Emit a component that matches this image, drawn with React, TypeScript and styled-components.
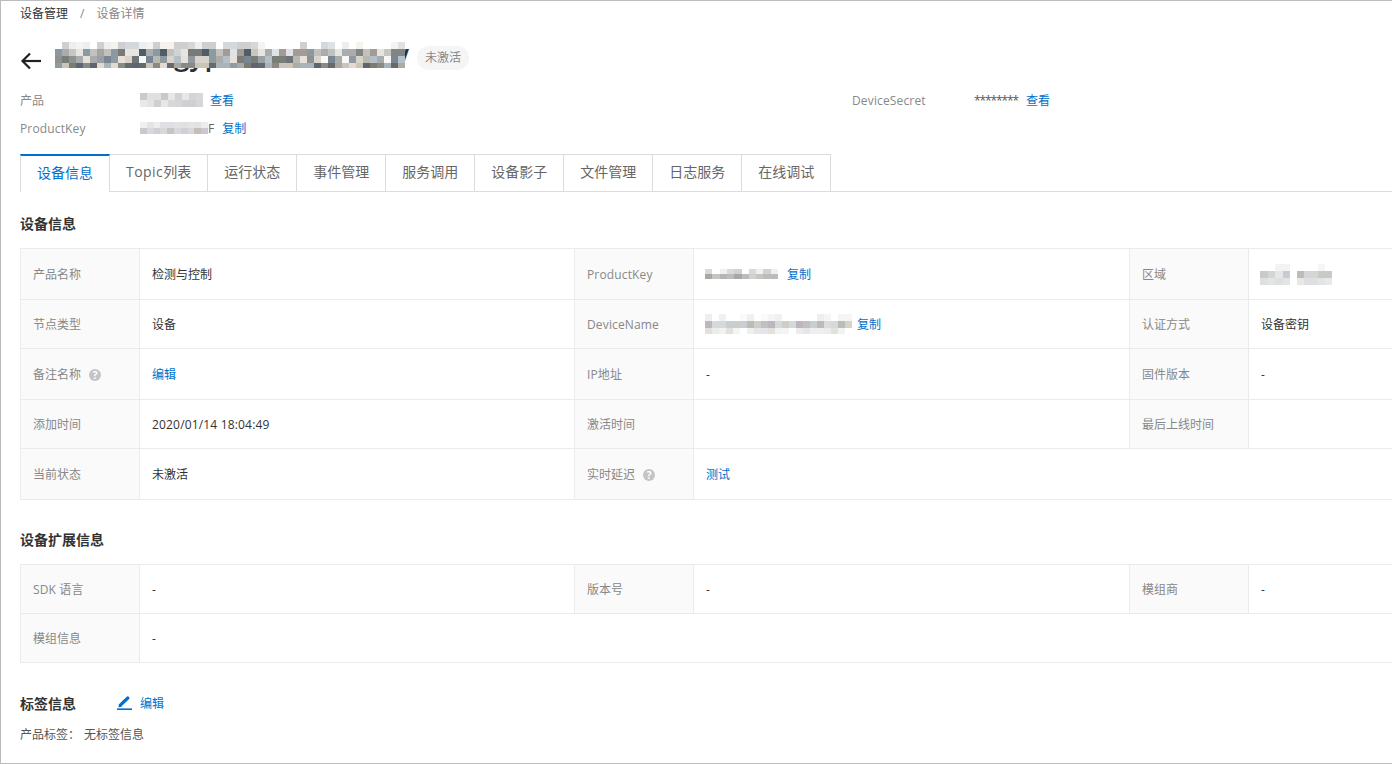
import React from 'react';
import styled, { createGlobalStyle } from 'styled-components';

const GlobalStyle = createGlobalStyle`
  html, body {
    margin: 0;
    padding: 0;
    background: #fff;
  }
  body {
    font-family: "Open Sans", "Noto Sans CJK SC", sans-serif;
    font-size: 12px;
    color: #333;
  }
`;

const TABS = ['设备信息', 'Topic列表', '运行状态', '事件管理', '服务调用', '设备影子', '文件管理', '日志服务', '在线调试'];

const TITLE_ROWS = [
  ['#ffffff', '#ffffff', '#f6f3ef', '#d5d8da', '#cfcfd0', '#eceff2', '#ffffff', '#dfe2e4'],
  ['#e8e5e0', '#a5a6a4', '#8a9aa2', '#c8c6c2', '#a39b94', '#7f8683', '#dde3e7', '#777a78', '#c0c2be', '#4f5d68', '#d2d3d5', '#aaacae', '#c4c0bc'],
  ['#8d9190', '#e6e1da', '#a8acac', '#788691', '#f8f8f6', '#5f6b75', '#7a7c78', '#b8b8b0', '#909a9e', '#6e7478', '#b5bfc6', '#d8d4cc', '#9a9fa3'],
  ['#b0aaa2', '#8f9ba3', '#8a8a84', '#cbc4b8', '#666a6a', '#a9b4ba', '#7d7a72', '#c2c6c8', '#e2dad0', '#5d6670', '#a8a8a4'],
];
const PALE_ROWS = [
  ['#e9e7e6', '#d5d4d6', '#cfcdcc', '#dfe0e2', '#e4e4e6', '#d2d2d6', '#cbcac8', '#d8d8dc', '#c9c9cc'],
  ['#ebe9e8', '#d9d8d8', '#d2d0ce', '#e2e3e5', '#d6d6da', '#cfcfd2', '#e6e6e6'],
];
const KEY_ROWS = [
  ['#f2efed', '#dfe0e4', '#e6e4e2', '#ecedef', '#e2e2e6'],
  ['#c4bdb8', '#cfd0d6', '#c6c4c6', '#d8d8da', '#c9c9cd'],
];
const SMALL_KEY_ROWS = [
  ['#e6e6e4', '#cfd2cf', '#f0f0ee', '#d8dad8', '#ffffff'],
  ['#a9a7a5', '#c4c6c2', '#bcbcbc', '#d0d2d0', '#b4b6b4'],
];
const NAME_ROWS = [
  ['#ffffff', '#f5f5f5', '#f0f0f0', '#fafafa', '#eeeeee', '#ffffff'],
  ['#dcdcdc', '#c2bfc2', '#cfcec6', '#b8bdb8', '#d4d9d9', '#bdb6c0', '#d6d2c8', '#c9ced0'],
  ['#f2f2f2', '#ececec', '#e2e2dc', '#f4f4f4', '#e6e6e8', '#efefef', '#ffffff'],
];
const REGION_ROWS = [
  ['#ffffff', '#f3f3f1', '#f6f6f6', '#ffffff'],
  ['#c9cac6', '#bcbdb8', '#c6ccd2', '#d4d6d6', '#e4e6e8', '#d8d8d0', '#8e9498'],
  ['#e8e8e6', '#e2e4e6', '#dedfe0', '#eeeeee', '#d6d8d8', '#f0f0f0'],
];

const pick = (seed: number) => (seed * 1103515245 + 12345) & 0x7fffffff;

// blurred values are drawn as pixel mosaics
const Mosaic: React.FC<{ cols: number; cell: number; seed: number; palette: string[][]; heights: number[] }> = ({
  cols,
  cell,
  seed,
  palette,
  heights,
}) => {
  const cells: React.ReactNode[] = [];
  let s = seed;
  let top = 0;
  heights.forEach((h, y) => {
    const colours = palette[y % palette.length];
    for (let x = 0; x < cols; x++) {
      s = pick(s);
      cells.push(
        <rect key={`${x}-${y}`} x={x * cell} y={top} width={cell + 0.2} height={h} fill={colours[(s >> 16) % colours.length]} />,
      );
    }
    top += h;
  });
  return (
    <MosaicSvg width={cols * cell} height={top} viewBox={`0 0 ${cols * cell} ${top}`} shapeRendering="crispEdges">
      {cells}
    </MosaicSvg>
  );
};

const HelpIcon = () => <HelpDot>?</HelpDot>;

const EditIcon = () => (
  <svg width="15" height="14" viewBox="0 0 15 14" fill="none">
    <path d="M3.4 9.2 10.8 2" stroke="#0070cc" strokeWidth="3.2" strokeLinecap="round" />
    <path d="M1.4 11.6 2.2 8l2.6 2.6z" fill="#0070cc" />
    <rect x="0" y="12.4" width="15" height="1.6" fill="#0070cc" />
  </svg>
);

const BackArrow = () => (
  <svg width="22" height="18" viewBox="0 0 22 18" fill="none" stroke="#222" strokeWidth="2.2">
    <path d="M21 9H2.5" />
    <path d="M10 1.5 2.5 9l7.5 7.5" />
  </svg>
);

const DetailColumns = () => (
  <colgroup>
    <LabelCol />
    <ValueCol />
    <LabelCol />
    <ValueCol $wide />
    <LabelCol />
    <col />
  </colgroup>
);

export default function App() {
  return (
    <Page>
      <GlobalStyle />
      <Breadcrumb>
        <Crumb>设备管理</Crumb>
        <CrumbSep>/</CrumbSep>
        <CrumbCurrent>设备详情</CrumbCurrent>
      </Breadcrumb>

      <TitleRow>
        <BackButton>
          <BackArrow />
        </BackButton>
        <TitleBlur>
          <TitleTail $left={119}>gyp</TitleTail>
          <TitleTail $left={339}>v</TitleTail>
          <Mosaic cols={50} cell={7} seed={37} palette={TITLE_ROWS} heights={[7, 7, 7, 5]} />
        </TitleBlur>
        <Badge>未激活</Badge>
      </TitleRow>

      <MetaGrid>
        <MetaLabel>产品</MetaLabel>
        <MetaValue>
          <Mosaic cols={9} cell={7} seed={11} palette={PALE_ROWS} heights={[7, 7]} />
          <Link>查看</Link>
        </MetaValue>
        <MetaLabel $latin>DeviceSecret</MetaLabel>
        <MetaValue>
          <Secret>********</Secret>
          <Link>查看</Link>
        </MetaValue>
        <MetaLabel $latin>ProductKey</MetaLabel>
        <MetaValue>
          <KeyBlur>
            <Mosaic cols={10} cell={6.8} seed={5} palette={KEY_ROWS} heights={[6, 6]} />
            <span>F</span>
          </KeyBlur>
          <Link>复制</Link>
        </MetaValue>
      </MetaGrid>

      <Tabs>
        {TABS.map((tab, i) => (
          <Tab key={tab} $active={i === 0}>
            {tab.startsWith('Topic') ? (
              <>
                <TabLatin>Topic</TabLatin>列表
              </>
            ) : (
              tab
            )}
          </Tab>
        ))}
      </Tabs>

      <SectionTitle $top={20}>设备信息</SectionTitle>
      <InfoTable>
        <DetailColumns />
        <tbody>
          <Row $h={51}>
            <Label>产品名称</Label>
            <Value>检测与控制</Value>
            <Label $latin>ProductKey</Label>
            <Value>
              <ValueInner>
                <Mosaic cols={10} cell={7.3} seed={23} palette={SMALL_KEY_ROWS} heights={[5, 5]} />
                <Link>复制</Link>
              </ValueInner>
            </Value>
            <Label>区域</Label>
            <Value>
              <ValueInner>
                <Mosaic cols={4} cell={7.5} seed={3} palette={REGION_ROWS} heights={[7, 7, 7]} />
                <RegionGap />
                <Mosaic cols={5} cell={7} seed={71} palette={REGION_ROWS} heights={[7, 7, 7]} />
              </ValueInner>
            </Value>
          </Row>
          <Row $h={49}>
            <Label>节点类型</Label>
            <Value>设备</Value>
            <Label $latin>DeviceName</Label>
            <Value>
              <ValueInner $shift>
                <Mosaic cols={21} cell={7} seed={41} palette={NAME_ROWS} heights={[7, 7, 6]} />
                <Link>复制</Link>
              </ValueInner>
            </Value>
            <Label>认证方式</Label>
            <Value>设备密钥</Value>
          </Row>
          <Row $h={51}>
            <Label>
              备注名称
              <HelpIcon />
            </Label>
            <Value>
              <BareLink>编辑</BareLink>
            </Value>
            <Label $latin>IP地址</Label>
            <Value>-</Value>
            <Label>固件版本</Label>
            <Value>-</Value>
          </Row>
          <Row $h={49}>
            <Label>添加时间</Label>
            <Value $latin>2020/01/14 18:04:49</Value>
            <Label>激活时间</Label>
            <Value />
            <Label>最后上线时间</Label>
            <Value />
          </Row>
          <Row $h={51}>
            <Label>当前状态</Label>
            <Value>未激活</Value>
            <Label>
              实时延迟
              <HelpIcon />
            </Label>
            <Value colSpan={3}>
              <BareLink>测试</BareLink>
            </Value>
          </Row>
        </tbody>
      </InfoTable>

      <SectionTitle $top={28}>设备扩展信息</SectionTitle>
      <InfoTable>
        <DetailColumns />
        <tbody>
          <Row $h={49}>
            <Label $latin>SDK 语言</Label>
            <Value>-</Value>
            <Label>版本号</Label>
            <Value>-</Value>
            <Label>模组商</Label>
            <Value>-</Value>
          </Row>
          <Row $h={49}>
            <Label>模组信息</Label>
            <Value colSpan={5}>-</Value>
          </Row>
        </tbody>
      </InfoTable>

      <TagHeader>
        <TagTitle>标签信息</TagTitle>
        <EditLink>
          <EditIcon />
          编辑
        </EditLink>
      </TagHeader>
      <TagLine>
        <span>产品标签：</span>
        <span>无标签信息</span>
      </TagLine>
    </Page>
  );
}

const Page = styled.div`
  box-sizing: border-box;
  width: 1392px;
  height: 764px;
  overflow: hidden;
  padding-left: 19px;
  border: 1px solid #bcbcbc;
  border-right: 0;
`;

const MosaicSvg = styled.svg`
  display: block;
  flex: none;
  position: relative;
`;

const Breadcrumb = styled.div`
  display: flex;
  align-items: center;
  height: 26px;
  line-height: 26px;
`;

const Crumb = styled.span`
  color: #333;
`;

const CrumbSep = styled.span`
  margin: 0 12px;
  color: #888;
`;

const CrumbCurrent = styled.span`
  color: #888;
`;

const TitleRow = styled.div`
  display: flex;
  align-items: center;
  height: 38px;
  margin-top: 15px;
`;

const BackButton = styled.span`
  display: flex;
  width: 35px;
  flex: none;
`;

const TitleBlur = styled.div`
  position: relative;
  z-index: 0;
  width: 350px;
  height: 26px;
  margin-bottom: 13px;
  display: flex;
`;

const TitleTail = styled.span<{ $left: number }>`
  position: absolute;
  left: ${(p) => p.$left}px;
  top: -3px;
  font-size: 28px;
  font-weight: 600;
  line-height: 30px;
  color: #2b2f36;
`;

const Badge = styled.span`
  margin-left: 12px;
  height: 24px;
  line-height: 24px;
  margin-bottom: 6px;
  padding: 0 8px;
  border-radius: 12px;
  background: #f5f5f5;
  color: #888;
`;

const MetaGrid = styled.div`
  display: grid;
  grid-template-columns: 120px 712px 122px 1fr;
  grid-auto-rows: 28px;
  margin-top: 6px;
`;

const MetaLabel = styled.div<{ $latin?: boolean }>`
  display: flex;
  align-items: center;
  color: #888;
  letter-spacing: ${(p) => (p.$latin ? '0.15px' : '0')};
`;

const MetaValue = styled.div`
  display: flex;
  align-items: center;
  color: #666;
`;

const Secret = styled.span`
  color: #555;
  letter-spacing: -1.1px;
  margin-right: 1px;
`;

const KeyBlur = styled.span`
  display: inline-flex;
  align-items: center;
  margin-right: 1px;
  color: #666;
`;

const Link = styled.a`
  margin-left: 7px;
  color: #0070cc;
  cursor: pointer;
`;

const BareLink = styled.a`
  color: #0070cc;
  cursor: pointer;
`;

const Tabs = styled.div`
  display: flex;
  height: 38px;
  margin-top: 12px;
  box-sizing: border-box;
  border-bottom: 1px solid #dcdcdc;
  margin-right: -1px;
`;

const Tab = styled.div<{ $active?: boolean }>`
  box-sizing: border-box;
  height: ${(p) => (p.$active ? '38px' : '37px')};
  padding: 0 16px;
  line-height: 34px;
  text-align: center;
  font-size: 14px;
  color: ${(p) => (p.$active ? '#0070cc' : '#666')};
  background: #fff;
  border-top: ${(p) => (p.$active ? '2px solid #0070cc' : '1px solid #dcdcdc')};
  border-right: 1px solid #dcdcdc;
  border-left: ${(p) => (p.$active ? '1px solid #dcdcdc' : '0')};
`;

const TabLatin = styled.span`
  letter-spacing: 0.45px;
`;

const SectionTitle = styled.h3<{ $top: number }>`
  margin: ${(p) => p.$top}px 0 12px;
  height: 24px;
  line-height: 24px;
  font-size: 14px;
  font-weight: 700;
  color: #333;
`;

const InfoTable = styled.table`
  table-layout: fixed;
  width: 1374px;
  border-collapse: collapse;
  border: 1px solid #ebebeb;
`;

const LabelCol = styled.col`
  width: 119px;
`;

const ValueCol = styled.col<{ $wide?: boolean }>`
  width: ${(p) => (p.$wide ? '436px' : '435px')};
`;

const Row = styled.tr<{ $h: number }>`
  height: ${(p) => p.$h}px;
`;

const Label = styled.td<{ $latin?: boolean }>`
  padding: 0 12px;
  border: 1px solid #ebebeb;
  background: #fafafa;
  color: #888;
  white-space: nowrap;
  letter-spacing: ${(p) => (p.$latin ? '0.15px' : '0')};
`;

const Value = styled.td<{ $latin?: boolean }>`
  padding: 0 12px;
  border: 1px solid #ebebeb;
  color: #333;
  letter-spacing: ${(p) => (p.$latin ? '0.17px' : '0')};
`;

const ValueInner = styled.div<{ $shift?: boolean }>`
  display: flex;
  align-items: center;
  margin-left: -1px;

  & > a {
    margin-left: ${(p) => (p.$shift ? '5px' : '9px')};
  }
`;

const RegionGap = styled.span`
  display: inline-block;
  width: 7px;
`;

const HelpDot = styled.span`
  display: inline-block;
  width: 12px;
  height: 12px;
  margin-left: 8px;
  border-radius: 50%;
  background: #c4c4c4;
  color: #fff;
  font-size: 10px;
  font-weight: 700;
  line-height: 12px;
  text-align: center;
  vertical-align: 0;
`;

const TagHeader = styled.div`
  display: flex;
  align-items: center;
  height: 24px;
  margin-top: 28px;
`;

const TagTitle = styled.span`
  width: 97px;
  font-size: 14px;
  font-weight: 700;
  color: #333;
`;

const EditLink = styled.a`
  display: inline-flex;
  align-items: center;
  gap: 8px;
  color: #0070cc;
`;

const TagLine = styled.div`
  display: flex;
  gap: 4px;
  height: 20px;
  line-height: 20px;
  margin-top: 10px;
  color: #555;
`;
